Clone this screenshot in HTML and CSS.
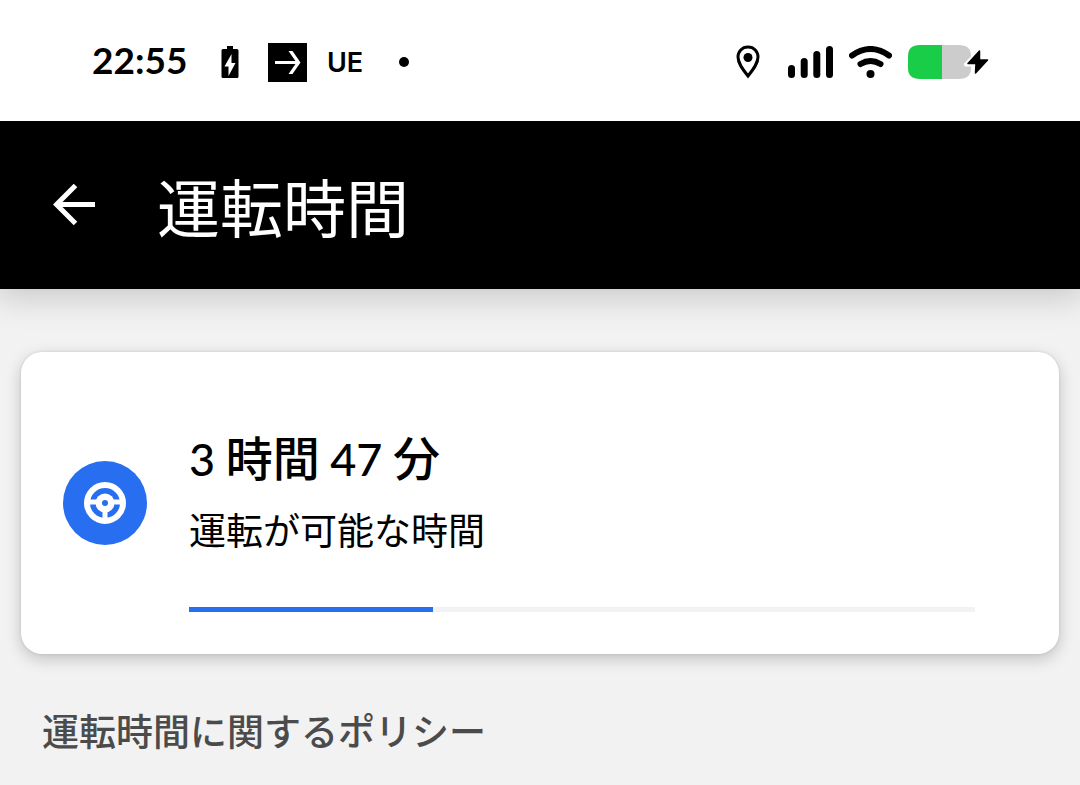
FILE: index.html
```html
<!DOCTYPE html>
<html lang="ja">
<head>
<meta charset="utf-8">
<meta name="viewport" content="width=device-width, initial-scale=1">
<title>運転時間</title>
<link rel="stylesheet" href="styles.css">
</head>
<body>
<div class="status-bar">
  <div class="status-left">
    <time class="clock">22:55</time>
    <svg class="charge-icon" width="18" height="34" viewBox="0 0 18 34" aria-hidden="true">
      <path d="M6 1h6v3h4q1.500 0 1.500 1.500v26q0 1.500-1.500 1.500H2q-1.500 0-1.500-1.500v-26Q.5 4 2 4h4z" fill="#000"/>
      <path d="M10.500 9L3.500 21.500h4V31l7-13h-4z" fill="#fff"/>
    </svg>
    <svg class="arrow-tile" width="39" height="39" viewBox="0 0 39 39" aria-hidden="true">
      <path d="M0 0h39v39H0z" fill="#000"/>
      <path d="M20.500 8h4l8 11.500-8 11.500h-4l8-11.500z" fill="#fff"/>
      <path d="M7 19.500h24" stroke="#fff" stroke-width="3"/>
    </svg>
    <span class="app-mark">UE</span>
    <span class="more-dot"></span>
  </div>
  <div class="status-right">
    <svg class="pin" width="24" height="34" viewBox="0 0 24 34" aria-hidden="true">
      <path d="M12 2C6 2 2 6.500 2 12c0 6 4 11.500 10 19 6-7.500 10-13 10-19C22 6.500 18 2 12 2z" fill="none" stroke="#000" stroke-width="3"/>
      <circle cx="12" cy="12.500" r="4.500"/>
    </svg>
    <svg class="signal" width="45" height="32" viewBox="0 0 45 32" aria-hidden="true">
      <rect x="0" y="19" width="7" height="13" rx="3.500"/>
      <rect x="12.700" y="12" width="7" height="20" rx="3.500"/>
      <rect x="25.300" y="5" width="7" height="27" rx="3.500"/>
      <rect x="38" y="0" width="7" height="32" rx="3.500"/>
    </svg>
    <svg class="wifi" width="43" height="32" viewBox="0 0 43 32" aria-hidden="true">
      <g fill="none" stroke="#000" stroke-width="6" stroke-linecap="round">
        <path d="M3 9.500Q21.500-3.500 40 9.500"/>
        <path d="M11.500 18Q21.500 12 31.500 18"/>
      </g>
      <circle cx="21.500" cy="28" r="4"/>
    </svg>
    <svg class="battery" width="82" height="34" viewBox="0 0 82 34" aria-hidden="true">
      <path d="M34 0h17q12 0 12 11v12q0 11-12 11H34z" fill="#ccc"/>
      <path d="M34 0H12Q0 0 0 11v12q0 11 12 11h22z" fill="#1acd49"/>
      <path d="M72 5L58 19.500h8.500L66 29l14-14.500h-8.500z" fill="#fff" stroke="#fff" stroke-width="4" stroke-linejoin="round"/>
      <path d="M71.500 6L60 18.500h8L67.500 28 79.500 15h-8z" stroke="#000" stroke-width="1.500" stroke-linejoin="round"/>
    </svg>
  </div>
</div>
<header class="app-bar">
  <button class="back" type="button" aria-label="戻る">
    <svg width="42" height="42" viewBox="0 0 42 42" aria-hidden="true">
      <path d="M42 20.500H4M22.500 1.500L3.500 20.500l19 19" fill="none" stroke="#fff" stroke-width="5"/>
    </svg>
  </button>
  <h1 class="title">運転時間</h1>
</header>
<main class="content">
  <section class="card">
    <svg class="wheel" width="84" height="84" viewBox="0 0 84 84" aria-hidden="true">
      <circle cx="42" cy="42" r="42" fill="#276ef1"/>
      <circle cx="42" cy="42" r="18" fill="none" stroke="#fff" stroke-width="6"/>
      <path d="M24 41h36M42 42v18" stroke="#fff" stroke-width="5"/>
      <circle cx="42" cy="42" r="9.500" fill="#fff"/>
      <circle cx="42" cy="42" r="3" fill="#276ef1"/>
    </svg>
    <div class="details">
      <h2 class="remaining" id="remaining"><span class="number">3</span> 時間 <span class="number">47</span> 分</h2>
      <p class="caption">運転が可能な時間</p>
      <div class="track" role="progressbar" aria-labelledby="remaining" aria-valuenow="31" aria-valuemin="0" aria-valuemax="100">
        <div class="fill" style="width: 31%"></div>
      </div>
    </div>
  </section>
  <h2 class="policy">運転時間に関するポリシー</h2>
</main>
</body>
</html>
```
FILE: styles.css
```css
* { box-sizing: border-box; }

body {
  margin: 0;
  min-height: 100vh;
  background: #f2f2f2;
  color: #000;
  font-family: "Noto Sans CJK JP", sans-serif;
}

h1, h2, p { margin: 0; }
svg { display: block; flex: none; }

.status-bar {
  position: relative;
  z-index: 1;
  display: flex;
  justify-content: space-between;
  align-items: center;
  padding: 41px 90px 38px 92px;
  background: #fff;
}

.status-left, .status-right {
  display: flex;
  align-items: center;
  height: 42px;
}

.clock {
  width: 97px;
  padding-bottom: 4px;
  font: 700 37px/42px Lato, sans-serif;
}

.charge-icon { margin-left: 32px; }
.arrow-tile { margin-left: 29px; }

.app-mark {
  width: 36px;
  margin-left: 20px;
  padding-top: 2px;
  font: 600 27px/42px Inter, sans-serif;
}

.more-dot {
  width: 10px;
  height: 10px;
  margin-left: 36px;
  border-radius: 50%;
  background: #000;
}

.signal { margin-left: 28px; }
.wifi { margin-left: 16px; }
.battery { margin-left: 16px; }

.app-bar {
  display: flex;
  align-items: center;
  gap: 62px;
  padding: 36px 53px;
  background: #000;
  color: #fff;
  box-shadow: 0 4px 32px 4px rgba(0, 0, 0, 0.18);
}

.back {
  padding: 0;
  border: 0;
  background: none;
}

.title {
  font-size: 63px;
  font-weight: 400;
  line-height: 96px;
}

.content { padding: 63px 21px 32px; }

.card {
  display: flex;
  align-items: center;
  gap: 42px;
  padding: 72px 84px 42px 42px;
  border-radius: 21px;
  background: #fff;
  box-shadow: 0 5px 16px rgba(0, 0, 0, 0.2), 0 0 3px rgba(0, 0, 0, 0.12);
}

.wheel { margin-top: -30px; }
.details { flex: 1; }

.remaining {
  font-size: 47px;
  font-weight: 500;
  line-height: 64px;
}

.number {
  font-family: Lato, sans-serif;
  font-size: 45px;
  line-height: 1;
}

.caption {
  margin-top: 14px;
  font-size: 37px;
  line-height: 54px;
}

.track {
  height: 5px;
  margin-top: 51px;
  background: #f2f2f2;
}

.fill {
  height: 100%;
  background: #276ef1;
}

.policy {
  padding: 49px 21px 0;
  color: #4b4b4b;
  font-size: 37px;
  font-weight: 500;
  line-height: 54px;
}
```
